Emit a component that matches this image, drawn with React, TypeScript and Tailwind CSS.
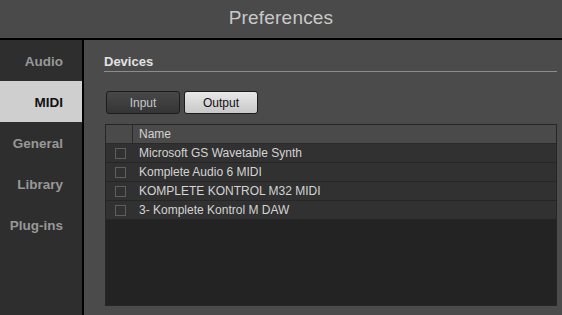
import React from 'react';

const font = { fontFamily: '"Liberation Sans", Arial, sans-serif' };

const navItems = ['Audio', 'MIDI', 'General', 'Library', 'Plug-ins'];
const devices = ['Microsoft GS Wavetable Synth', 'Komplete Audio 6 MIDI', 'KOMPLETE KONTROL M32 MIDI', '3- Komplete Kontrol M DAW'];

export default function App() {
  return (
    <div className="w-[562px] h-[315px] flex flex-col bg-[#4b4b4b] overflow-hidden" style={font}>
      <div className="h-[40px] shrink-0 border-b-2 border-black bg-[#4a4a4a] flex items-center justify-center">
        <span className="text-[19px] text-[#c9c9c9] tracking-[0.2px] -mt-[2px]">Preferences</span>
      </div>

      <div className="flex flex-1 min-h-0">
        <div className="w-[84px] shrink-0 bg-[#2e2e2e] border-r-2 border-black flex flex-col">
          {navItems.map((item) => {
            const active = item === 'MIDI';
            return (
              <div
                key={item}
                className={`h-[41px] flex items-center justify-end pr-[19px] pt-[3px] text-[13.5px] font-bold ${
                  active ? 'bg-[#cfcfcf] text-[#111]' : 'text-[#989898]'
                }`}
              >
                {item}
              </div>
            );
          })}
        </div>

        <div className="flex-1 flex flex-col pl-[20px] pr-[5px] pt-[14px] pb-[9px]">
          <div className="pb-[1px] border-b border-[#8c8c8c] leading-[16px] text-[13px] font-bold text-[#e2e2e2]">
            Devices
          </div>

          <div className="mt-[19px] ml-[2px] flex gap-[4px]">
            <button
              type="button"
              className="w-[74px] h-[23px] rounded-[3px] border border-[#1c1c1c] bg-gradient-to-b from-[#484848] to-[#353535] text-[12px] text-[#c6c6c6]"
            >
              Input
            </button>
            <button
              type="button"
              className="w-[74px] h-[23px] rounded-[3px] border border-[#1c1c1c] bg-gradient-to-b from-[#e8e8e8] to-[#c8c8c8] text-[12px] text-[#111]"
            >
              Output
            </button>
          </div>

          <div className="mt-[10px] ml-[1px] flex-1 flex flex-col border border-[#262626] bg-[#232323]">
            <div className="h-[19px] shrink-0 flex bg-[#4a4a4a] border-b border-[#2a2a2a]">
              <div className="w-[27px] border-r border-[#2a2a2a]" />
              <div className="pl-[6px] flex items-center text-[12px] text-[#d2d2d2]">Name</div>
            </div>
            {devices.map((d) => (
              <div key={d} className="h-[19px] shrink-0 flex items-center bg-[#313131] border-b border-[#262626]">
                <div className="w-[27px] flex justify-center pl-[1px]">
                  <div className="w-[11px] h-[11px] border border-[#5e5e5e]" />
                </div>
                <div className="pl-[6px] text-[12px] text-[#d4d4d4]">{d}</div>
              </div>
            ))}
          </div>
        </div>
      </div>
    </div>
  );
}
